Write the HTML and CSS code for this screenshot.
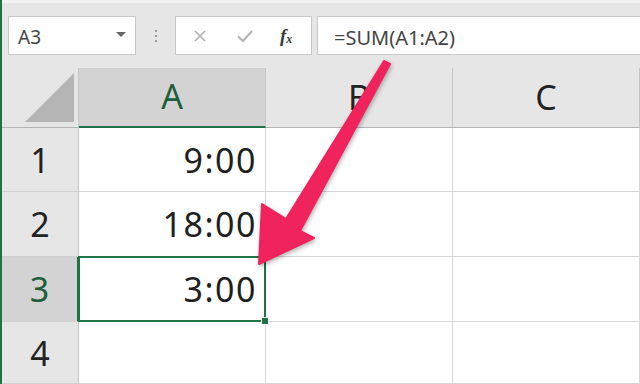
FILE: index.html
```html
<!DOCTYPE html>
<html lang="ja">
<head>
    <meta charset="UTF-8">
    <title>Excel - SUM</title>
    <link rel="stylesheet" href="styles.css">
</head>
<body>
    <div class="app">
        <div class="toolbar">
            <div class="namebox">
                <span>A3</span>
                <span class="caret"></span>
            </div>
            <div class="grip"><i></i><i></i><i></i></div>
            <div class="fx-buttons">
                <svg width="14" height="14" viewBox="0 0 14 14"><path d="M2 2 L12 12 M12 2 L2 12" stroke="#b4b4b4" stroke-width="1.6" fill="none"/></svg>
                <svg width="18" height="16" viewBox="0 0 18 16"><path d="M2 8.5 L7 13 L16 3" stroke="#b4b4b4" stroke-width="2" fill="none"/></svg>
                <span class="fx">f<sub>x</sub></span>
            </div>
            <div class="formula">=SUM(A1:A2)</div>
        </div>

        <div class="sheet">
            <div class="corner"><span class="tri"></span></div>
            <div class="col-head active">A</div>
            <div class="col-head">B</div>
            <div class="col-head">C</div>

            <div class="row-head">1</div>
            <div class="cell">9:00</div>
            <div class="cell"></div>
            <div class="cell"></div>

            <div class="row-head">2</div>
            <div class="cell">18:00</div>
            <div class="cell"></div>
            <div class="cell"></div>

            <div class="row-head active">3</div>
            <div class="cell selected">3:00</div>
            <div class="cell"></div>
            <div class="cell"></div>

            <div class="row-head">4</div>
            <div class="cell"></div>
            <div class="cell"></div>
            <div class="cell"></div>
        </div>

        <!-- callout arrow pointing at A3 -->
        <svg class="arrow" width="640" height="384" viewBox="0 0 640 384">
            <polygon points="384,61 390,64 300,231 314,238 259,264 262,204 286,219" fill="#f0235d" stroke="#f0235d" stroke-width="2" stroke-linejoin="round"/>
        </svg>
    </div>
</body>
</html>
```

FILE: styles.css
```css
* {
    margin: 0;
    padding: 0;
    box-sizing: border-box;
}

body {
    font-family: 'Noto Sans', 'Open Sans', sans-serif;
    background: #fff;
    width: 640px;
    height: 384px;
    overflow: hidden;
}

.app {
    position: relative;
    height: 384px;
    border-left: 2px solid #217346;
    overflow: hidden;
}

.toolbar {
    height: 68px;
    background: #e6e6e6;
    border-top: 3px solid #f2f2f2;
    display: flex;
    align-items: flex-start;
    padding: 13px 0 0 6px;
}

.namebox {
    width: 128px;
    height: 39px;
    background: #fff;
    border: 1px solid #c8c8c8;
    display: flex;
    align-items: center;
    justify-content: space-between;
    padding: 2px 9px 0 9px;
    font-size: 19px;
    color: #444;
}

.caret {
    width: 0;
    height: 0;
    border-left: 5px solid transparent;
    border-right: 5px solid transparent;
    border-top: 5px solid #666;
    margin-bottom: 4px;
}

.grip {
    width: 39px;
    height: 39px;
    display: flex;
    flex-direction: column;
    align-items: center;
    justify-content: center;
    gap: 3px;
}

.grip i {
    width: 2px;
    height: 2px;
    background: #999;
}

.fx-buttons {
    width: 137px;
    height: 39px;
    background: #fff;
    border: 1px solid #c8c8c8;
    display: flex;
    align-items: center;
    padding: 0 0 0 17px;
    gap: 29px;
}

.fx {
    font-family: 'Liberation Serif', serif;
    font-style: italic;
    font-weight: bold;
    font-size: 19px;
    color: #3a3a3a;
    margin-left: -3px;
}

.fx sub {
    font-size: 12px;
    vertical-align: -1px;
}

.formula {
    flex: 1;
    height: 39px;
    margin-left: 5px;
    background: #fff;
    border: 1px solid #c8c8c8;
    border-right: none;
    padding: 3px 0 0 16px;
    font-size: 20px;
    color: #444;
    display: flex;
    align-items: center;
}

.sheet {
    display: grid;
    grid-template-columns: 77px 187px 187px 1fr;
    grid-template-rows: 60px 64px 65px 65px 1fr;
    height: 316px;
    font-size: 34px;
    color: #1f1f1f;
}

.corner {
    background: #e6e6e6;
    border-right: 1px solid #c6c6c6;
    border-bottom: 1px solid #b4b4b4;
    display: flex;
    align-items: flex-end;
    justify-content: flex-end;
    padding: 0 4px 5px 0;
}

.tri {
    width: 49px;
    height: 49px;
    background: #b5b5b5;
    clip-path: polygon(100% 0, 100% 100%, 0 100%);
}

.col-head {
    background: #e6e6e6;
    border-right: 1px solid #c6c6c6;
    border-bottom: 1px solid #b4b4b4;
    display: flex;
    align-items: center;
    justify-content: center;
    color: #222;
    padding-bottom: 2px;
}

.col-head.active {
    background: #d3d3d3;
    color: #1e5e3b;
    border-bottom: 2px solid #217346;
}

.row-head {
    background: #e6e6e6;
    border-right: 1px solid #c6c6c6;
    border-bottom: 1px solid #d0d0d0;
    display: flex;
    align-items: center;
    justify-content: center;
    color: #222;
}

.row-head.active {
    background: #d3d3d3;
    color: #1e5e3b;
    border-right: 2px solid #217346;
}

.cell {
    border-right: 1px solid #d6d6d6;
    border-bottom: 1px solid #d6d6d6;
    display: flex;
    align-items: center;
    justify-content: flex-end;
    padding: 0 8px 0 0;
    letter-spacing: 1.5px;
}

.cell.selected {
    position: relative;
}

.cell.selected::after {
    content: '';
    position: absolute;
    top: -1px;
    left: -1px;
    right: -1px;
    bottom: -1px;
    border: 2px solid #217346;
}

.cell.selected::before {
    content: '';
    position: absolute;
    right: -4px;
    bottom: -4px;
    width: 6px;
    height: 6px;
    background: #217346;
    border: 1px solid #fff;
    z-index: 1;
}

.arrow {
    position: absolute;
    top: 0;
    left: -2px;
    filter: drop-shadow(1px 2px 2px rgba(0, 0, 0, 0.3));
    pointer-events: none;
}
```
